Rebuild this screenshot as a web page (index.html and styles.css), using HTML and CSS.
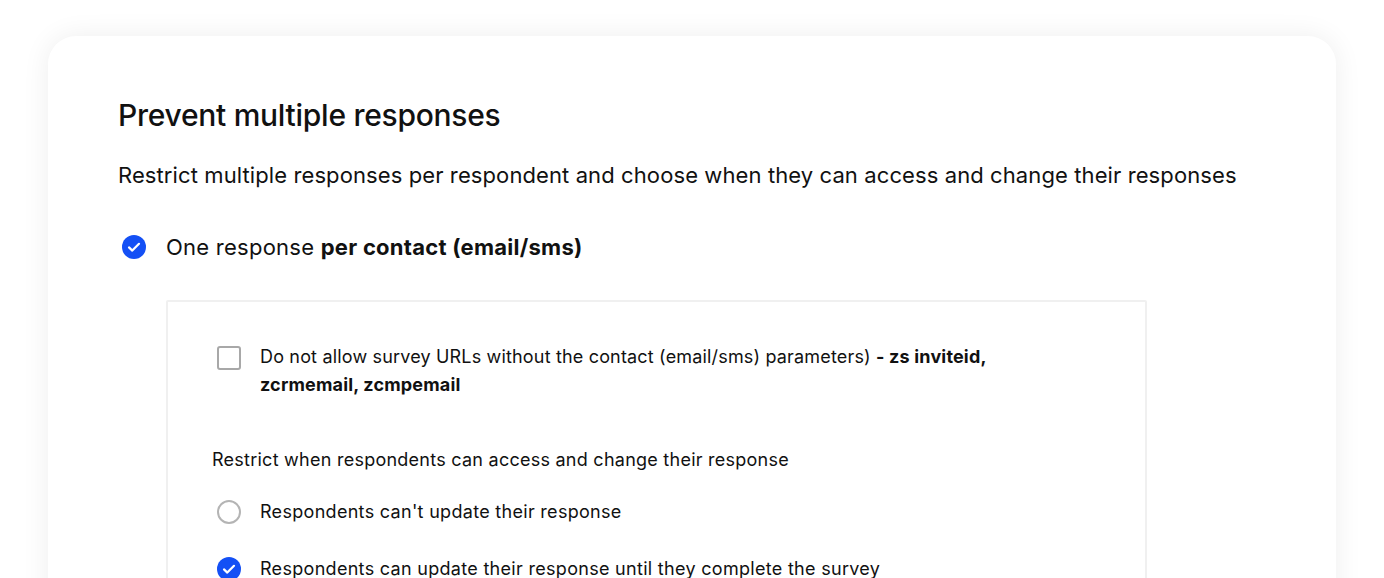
FILE: index.html
```html
<!DOCTYPE html>
<html>
<head>
<meta charset="utf-8">
<link rel="stylesheet" href="styles.css">
</head>
<body>
<div class="page">
  <div class="card">
    <h1 class="title">Prevent multiple responses</h1>
    <p class="subtitle">Restrict multiple responses per respondent and choose when they can access and change their responses</p>
    <div class="option">
      <span class="check-circle big">
        <svg viewBox="0 0 24 24" width="24" height="24"><circle cx="12" cy="12" r="12" fill="#1450f5"/><path d="M7 12.4l3.3 3.2L17 8.8" fill="none" stroke="#fff" stroke-width="2.2" stroke-linecap="round" stroke-linejoin="round"/></svg>
      </span>
      <span class="option-label">One response <b>per contact (email/sms)</b></span>
    </div>
    <div class="panel">
      <div class="cb-row">
        <span class="checkbox"></span>
        <span class="cb-label">Do not allow survey URLs without the contact (email/sms) parameters) <b>- zs inviteid,</b> <b>zcrmemail, zcmpemail</b></span>
      </div>
      <div class="section-label">Restrict when respondents can access and change their response</div>
      <div class="radio-row">
        <span class="radio"></span>
        <span class="radio-label">Respondents can't update their response</span>
      </div>
      <div class="radio-row">
        <span class="radio-checked">
          <svg viewBox="0 0 24 24" width="24" height="24"><circle cx="12" cy="12" r="12" fill="#1450f5"/><path d="M7 12.4l3.3 3.2L17 8.8" fill="none" stroke="#fff" stroke-width="2.2" stroke-linecap="round" stroke-linejoin="round"/></svg>
        </span>
        <span class="radio-label">Respondents can update their response until they complete the survey</span>
      </div>
    </div>
  </div>
</div>
</body>
</html>
```
FILE: styles.css
```css
html, body {
  margin: 0;
  padding: 0;
  background: #ffffff;
  overflow: hidden;
}
body {
  font-family: "Inter", "Lato", sans-serif;
  color: #111111;
}
.page {
  padding: 36px 48px 0 48px;
  height: 578px;
  box-sizing: border-box;
  overflow: hidden;
}
.card {
  background: #fff;
  border-radius: 28px;
  box-shadow: 0 0 28px rgba(0, 0, 0, 0.07);
  height: 800px;
  padding: 59px 0 0 70px;
  box-sizing: border-box;
}
.title {
  margin: 0;
  font-size: 30px;
  line-height: 40px;
  font-weight: 500;
  letter-spacing: -0.27px;
}
.subtitle {
  margin: 25px 0 0 0;
  font-size: 22px;
  line-height: 30px;
  font-weight: 400;
  letter-spacing: 0.1px;
}
.option {
  display: flex;
  align-items: center;
  margin-top: 42px;
  height: 30px;
}
.check-circle {
  display: flex;
  width: 24px;
  height: 24px;
  margin-left: 4px;
}
.option-label {
  margin-left: 20px;
  font-size: 22px;
  line-height: 30px;
  letter-spacing: 0.25px;
}
.option-label b {
  font-weight: 700;
}
.panel {
  margin-top: 38px;
  margin-left: 48px;
  width: 981px;
  border: 2px solid #f0f0f0;
  border-radius: 2px;
  box-sizing: border-box;
  padding: 41px 0 0 44px;
  height: 400px;
}
.cb-row {
  display: flex;
  align-items: flex-start;
}
.checkbox {
  flex: none;
  width: 20px;
  height: 20px;
  border: 2px solid #a8a8a8;
  border-radius: 3px;
  margin-left: 5px;
  margin-top: 3px;
}
.cb-label {
  margin-left: 19px;
  font-size: 18px;
  line-height: 28px;
  max-width: 760px;
  letter-spacing: 0.17px;
}
.cb-label b {
  font-weight: 700;
}
.section-label {
  margin-top: 47px;
  font-size: 18px;
  line-height: 28px;
  letter-spacing: 0.25px;
}
.radio-row {
  display: flex;
  align-items: center;
  margin-top: 24px;
  height: 28px;
}
.radio-row + .radio-row {
  margin-top: 29px;
}
.radio {
  flex: none;
  width: 20px;
  height: 20px;
  border: 2px solid #b4b4b4;
  border-radius: 50%;
  margin-left: 5px;
}
.radio-checked {
  flex: none;
  display: flex;
  width: 24px;
  height: 24px;
  margin-left: 5px;
}
.radio-label {
  margin-left: 19px;
  font-size: 18px;
  line-height: 28px;
  letter-spacing: 0.3px;
}
```
